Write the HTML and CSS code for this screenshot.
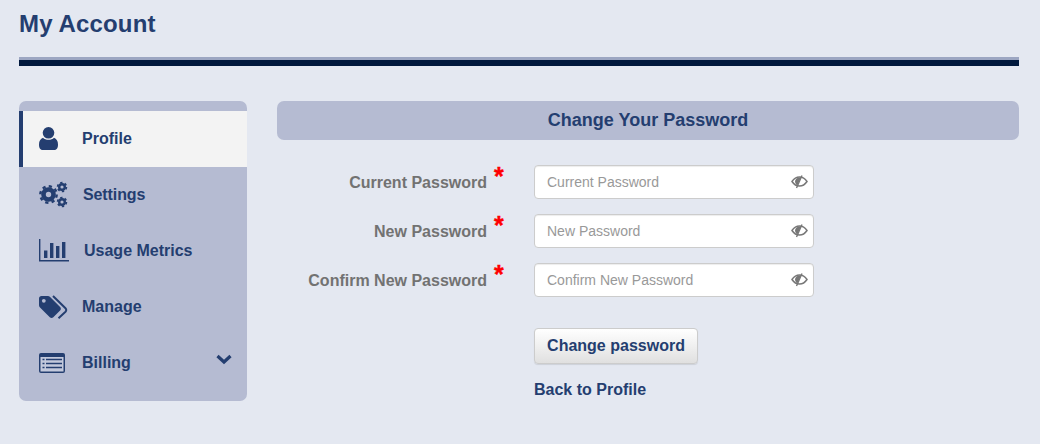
FILE: index.html
```html
<!DOCTYPE html>
<html lang="en">
<head>
<meta charset="utf-8">
<title>My Account</title>
<link rel="stylesheet" href="styles.css">
</head>
<body>
<div class="page">
  <header class="page-head"><h1>My Account</h1></header>
  <div class="rule"></div>
  <div class="content">
    <nav class="side">
      <a class="nav-item active">
        <svg class="ico" width="30" height="30" viewBox="0 0 30 30"><circle cx="9.500" cy="8.800" r="5.800" fill="#243e70"/><path d="M0 20.500c0-3.500 1.500-6 4-6.800 1.300 1.300 3.300 2.100 5.500 2.100s4.200-.8 5.500-2.100c2.500.8 4 3.300 4 6.800 0 4-1.500 5.500-4 5.500H4c-2.500 0-4-1.500-4-5.500z" fill="#243e70"/></svg>
        <span class="nav-label">Profile</span>
      </a>
      <a class="nav-item">
        <svg class="ico" width="30" height="30" viewBox="0 0 30 30">
          <g fill="none" stroke="#243e70">
            <circle cx="9.500" cy="14.500" r="5" stroke-width="4.600"/>
            <circle cx="9.500" cy="14.500" r="8.200" stroke-width="2.400" stroke-dasharray="3.220 3.220"/>
            <circle cx="23" cy="7" r="2.800" stroke-width="2.400"/>
            <circle cx="23" cy="7" r="4.400" stroke-width="1.700" stroke-dasharray="2.300 2.300"/>
            <circle cx="23" cy="22" r="2.800" stroke-width="2.400"/>
            <circle cx="23" cy="22" r="4.400" stroke-width="1.700" stroke-dasharray="2.300 2.300"/>
          </g>
        </svg>
        <span class="nav-label nudge-1">Settings</span>
      </a>
      <a class="nav-item">
        <svg class="ico" width="30" height="30" viewBox="0 0 30 30"><path d="M.7 3v21.700H30" fill="none" stroke="#243e70" stroke-width="1.400"/><path d="M5 14.500h3.400V22H5zM11 7h3.400v15H11zM17 10h3.400v12H17zM23 6h3.400v16H23z" fill="#243e70"/></svg>
        <span class="nav-label nudge-2">Usage Metrics</span>
      </a>
      <a class="nav-item">
        <svg class="ico" width="30" height="30" viewBox="0 0 30 30"><path d="M0 6.500C0 5 1 4 2.500 4h6.300c.9 0 1.700.4 2.300 1l10 10c1 1 1 2.500 0 3.500l-6.800 6.800c-1 1-2.500 1-3.500 0L1 15.500c-.6-.6-1-1.400-1-2.300z" fill="#243e70"/><circle cx="4.800" cy="8.800" r="1.900" fill="#b5bbd2"/><path d="M14 4l12.500 12.300c1 1 1 2.500 0 3.500l-7 6.500" fill="none" stroke="#243e70" stroke-width="2"/></svg>
        <span class="nav-label">Manage</span>
      </a>
      <a class="nav-item">
        <svg class="ico" width="30" height="30" viewBox="0 0 30 30"><rect x="0" y="5" width="26" height="20" rx="2" fill="#243e70"/><rect x="1.500" y="9" width="23" height="14.500" fill="#c3c9dc"/><path d="M7 11.500h16M7 15.500h16M7 19.500h16M3.500 11.500h2M3.500 15.500h2M3.500 19.500h2" stroke="#243e70" stroke-width="1.500"/></svg>
        <span class="nav-label">Billing</span>
        <svg class="chev" width="16" height="12" viewBox="0 0 16 12"><path d="M1.500 3l6.500 6 6.500-6" fill="none" stroke="#243e70" stroke-width="3.200"/></svg>
      </a>
    </nav>
    <main class="main">
      <h2 class="panel-title">Change Your Password</h2>
      <form class="form">
        <div class="row">
          <label class="lab">Current Password</label><span class="star">*</span>
          <div class="field"><input class="inp" type="text" placeholder="Current Password">
            <svg class="eye" width="17" height="16" viewBox="0 0 17 16"><path d="M1 7.500c2-3 4.500-4.500 7.500-4.500S14 4.500 16 7.500c-2 3-4.500 4.500-7.500 4.500S3 10.500 1 7.500z" fill="none" stroke="#777" stroke-width="1.500"/><path d="M4 7.500C4 5.500 6 3.500 8.500 3.500h1.500L6.300 11.500C5 10.500 4 9 4 7.500z" fill="#777"/><path d="M11 1.500L5.500 14" stroke="#777" stroke-width="1.400"/></svg>
          </div>
        </div>
        <div class="row">
          <label class="lab">New Password</label><span class="star">*</span>
          <div class="field"><input class="inp" type="text" placeholder="New Password">
            <svg class="eye" width="17" height="16" viewBox="0 0 17 16"><path d="M1 7.500c2-3 4.500-4.500 7.500-4.500S14 4.500 16 7.500c-2 3-4.500 4.500-7.500 4.500S3 10.500 1 7.500z" fill="none" stroke="#777" stroke-width="1.500"/><path d="M4 7.500C4 5.500 6 3.500 8.500 3.500h1.500L6.300 11.500C5 10.500 4 9 4 7.500z" fill="#777"/><path d="M11 1.500L5.500 14" stroke="#777" stroke-width="1.400"/></svg>
          </div>
        </div>
        <div class="row">
          <label class="lab">Confirm New Password</label><span class="star">*</span>
          <div class="field"><input class="inp" type="text" placeholder="Confirm New Password">
            <svg class="eye" width="17" height="16" viewBox="0 0 17 16"><path d="M1 7.500c2-3 4.500-4.500 7.500-4.500S14 4.500 16 7.500c-2 3-4.500 4.500-7.500 4.500S3 10.500 1 7.500z" fill="none" stroke="#777" stroke-width="1.500"/><path d="M4 7.500C4 5.500 6 3.500 8.500 3.500h1.500L6.300 11.500C5 10.500 4 9 4 7.500z" fill="#777"/><path d="M11 1.500L5.500 14" stroke="#777" stroke-width="1.400"/></svg>
          </div>
        </div>
        <div class="actions">
          <button class="btn" type="button">Change password</button>
          <a class="back">Back to Profile</a>
        </div>
      </form>
    </main>
  </div>
</div>
</body>
</html>
```
FILE: styles.css
```css
* { box-sizing: border-box; }
html, body { margin: 0; height: 100%; }
body { background: #e4e8f1; font-family: "Liberation Sans", Arial, sans-serif; color: #243e70; overflow: hidden; }
.page { padding: 0 21px 0 19px; }
.page-head { height: 57px; padding-top: 9px; }
h1 { margin: 0; font-size: 24px; line-height: 30px; font-weight: bold; letter-spacing: .15px; }
.rule { height: 9px; background: #00183d; border-top: 3px solid #9ca6c2; }
.content { display: flex; gap: 30px; margin-top: 35px; align-items: flex-start; }
.side { width: 228px; flex: none; padding: 10px 0; background: #b5bbd2; border-radius: 7px; }
.nav-item { display: flex; align-items: center; height: 56px; padding-left: 20px; font-size: 16px; font-weight: bold; position: relative; }
.nav-item.active { background: #f3f3f3; border-left: 4px solid #243e70; padding-left: 16px; }
.ico { flex: none; }
.nav-label { margin-left: 13px; }
.nudge-1 { margin-left: 14px; letter-spacing: -.1px; }
.nudge-2 { margin-left: 15px; }
.chev { position: absolute; right: 15px; top: 18px; }
.main { flex: 1; min-width: 0; }
.panel-title { margin: 0; height: 39px; line-height: 39px; background: #b5bbd2; border-radius: 7px; text-align: center; font-size: 18px; font-weight: bold; }
.form { padding-top: 25px; }
.row { display: flex; align-items: center; height: 34px; margin-bottom: 15px; }
.lab { width: 210px; padding-top: 2px; text-align: right; font-size: 16px; font-weight: bold; color: #727272; }
.star { width: 47px; padding-left: 7px; color: #f00; font-size: 25px; font-weight: bold; line-height: 34px; height: 34px; margin-top: -13px; -webkit-text-stroke: .4px #f00; }
.field { position: relative; width: 280px; height: 34px; }
.inp { display: block; width: 100%; height: 100%; padding: 0 34px 0 12px; border: 1px solid #ccc; border-radius: 4px; background: #fff; font: 14px "Liberation Sans", Arial, sans-serif; box-shadow: inset 0 1px 1px rgba(0,0,0,.075); color: #555; }
.inp::placeholder { color: #999; opacity: 1; }
.eye { position: absolute; right: 6px; top: 9px; }
.actions { margin: 31px 0 0 257px; display: flex; flex-direction: column; align-items: flex-start; }
.btn { height: 36px; width: 164px; padding: 0; border: 1px solid #ccc; border-radius: 4px; background: linear-gradient(#fff, #e0e0e0); font: bold 16px "Liberation Sans", Arial, sans-serif; color: #243e70; box-shadow: 0 1px 1px rgba(0,0,0,.1); }
.back { margin-top: 17px; font-size: 16px; line-height: 18px; font-weight: bold; }
```
